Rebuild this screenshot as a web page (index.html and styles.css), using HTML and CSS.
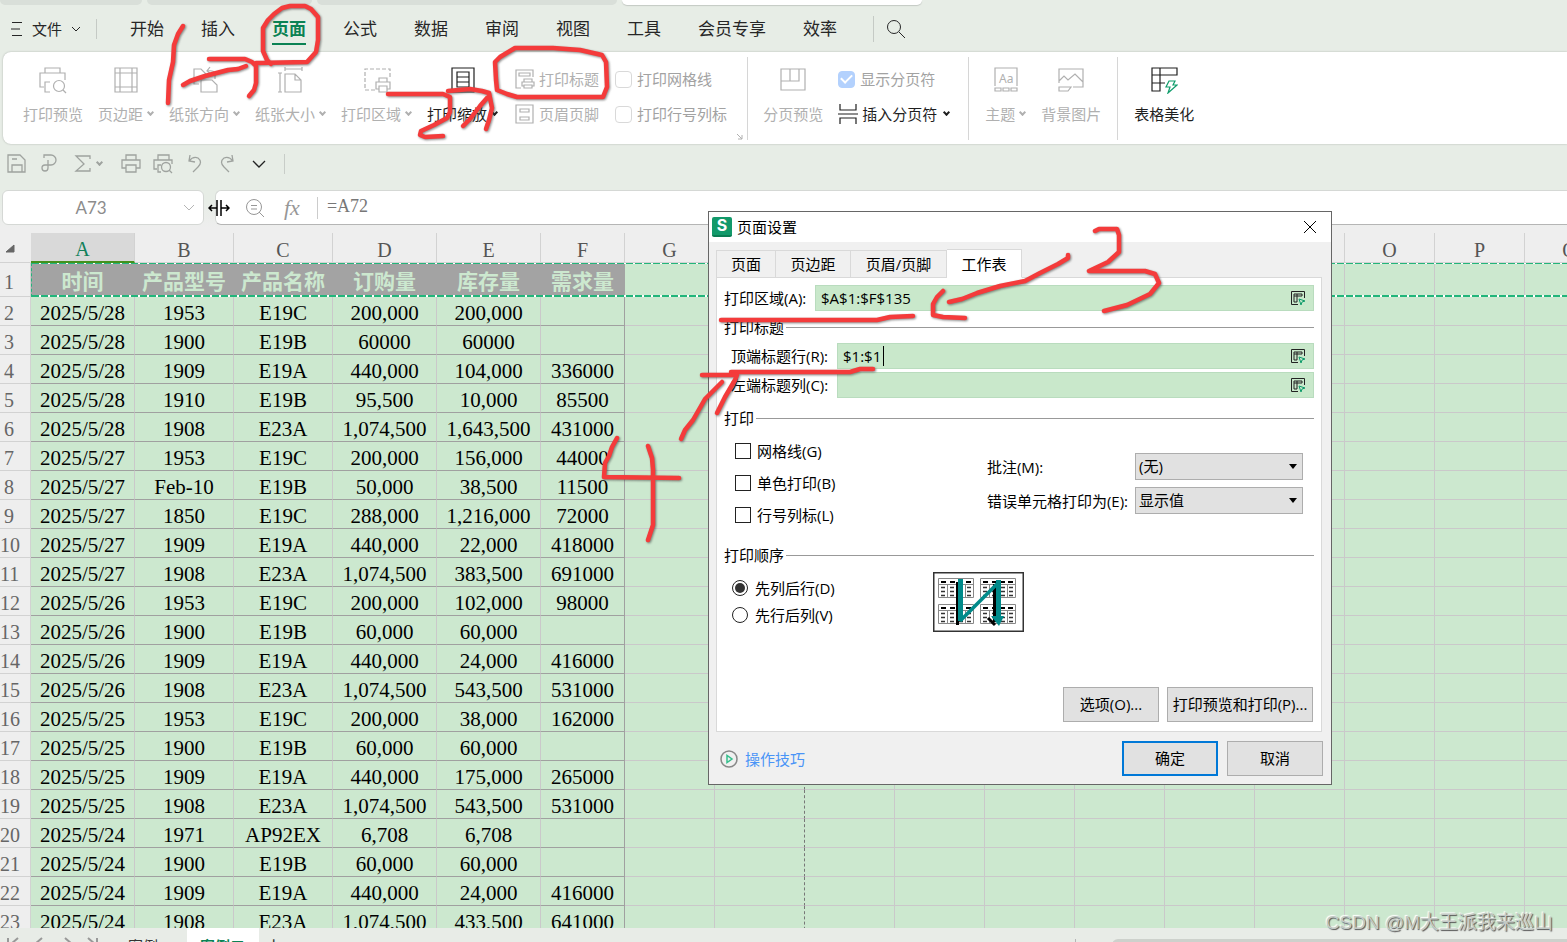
FILE: index.html
```
<!DOCTYPE html>
<html lang="zh-CN">
<head>
<meta charset="utf-8">
<title>页面设置</title>
<link rel="stylesheet" href="styles.css">
</head>
<body>
<div class="app">
  <div class="doc-tabs"><span class="doc-tab"></span><span class="doc-tab wide"></span><span class="doc-tab last"></span><span class="doc-tab active"></span></div>

  <nav class="menu">
    <button class="file-btn"><svg width="12" height="16" viewBox="0 0 12 16"><path d="M1 1.500h10M0 8h9M1 14.500h10" /></svg>文件<svg class="file-arrow" width="10" height="6" viewBox="0 0 10 6"><path d="M1 1l4 4 4-4"/></svg></button>
    <span class="menu-sep"></span>
    <div class="menu-items">
      <button>开始</button><button>插入</button><button class="active">页面</button><button>公式</button><button>数据</button><button>审阅</button><button>视图</button><button>工具</button><button>会员专享</button><button>效率</button>
    </div>
    <span class="menu-sep tall"></span>
    <button class="search" aria-label="搜索"><svg width="20" height="20" viewBox="0 0 20 20"><circle cx="8" cy="8" r="6.500"/><path d="M13 13l6 6"/></svg></button>
  </nav>

  <section class="ribbon">
    <div class="group">
      <button class="big"><svg width="28" height="28" viewBox="0 0 28 28"><path d="M6 7V2h15v5M5 21H1V7h25v7M11 16H6v10h5"/><circle cx="20" cy="20" r="5.500"/><path d="M24 24l3 3"/></svg><span>打印预览</span></button>
      <button class="big"><svg width="28" height="28" viewBox="0 0 28 28"><path d="M3 2h22v24H3zM8 2v24M20 2v24M3 7h22M3 21h22"/></svg><span>页边距<i class="chev"></i></span></button>
      <button class="big"><svg width="28" height="28" viewBox="0 0 28 28"><path d="M8 18H3V3h7l5 5v3M10 26V14h11l5 5v7zM24 13V7q-1-3-8-2M19 1l-3 4 4 3"/></svg><span>纸张方向<i class="chev"></i></span></button>
      <button class="big"><svg width="28" height="28" viewBox="0 0 28 28"><path d="M8 8h10l6 6v12H8zM18 8v6h6M8 3h17M8 1v4M25 1v4M3 7v19M1 7h4M1 26h4"/></svg><span>纸张大小<i class="chev"></i></span></button>
      <button class="big"><svg width="28" height="28" viewBox="0 0 28 28"><path stroke-dasharray="4 2" d="M12 24H2V3h25v9"/><path d="M16 16v-4h8v4M16 23h-3v-7h14v7h-3M16 20h8v6h-8z"/></svg><span>打印区域<i class="chev"></i></span></button>
      <button class="big on"><svg width="28" height="28" viewBox="0 0 28 28"><path d="M3 2h22v24H3zM8 6h12v15H8zM8 11h12M8 16h12"/></svg><span>打印缩放<i class="chev"></i></span></button>
      <div class="pairs">
        <button class="small"><svg width="20" height="20" viewBox="0 0 20 20"><path d="M6 19H1V1h17v7M4 4h11v3H4zM9 13v-3h8v3M9 17H7v-4h12v4h-2M9 16h8v3H9z"/></svg>打印标题</button>
        <label class="check"><input type="checkbox" disabled>打印网格线</label>
        <button class="small"><svg width="20" height="20" viewBox="0 0 20 20"><path d="M1 1h17v18H1zM5 5h9v3H5zM5 13h9v3H5z"/></svg>页眉页脚</button>
        <label class="check"><input type="checkbox" disabled>打印行号列标</label>
      </div>
      <svg class="launcher" width="7" height="7" viewBox="0 0 7 7"><path d="M1 1l5 5M6 2v4H2"/></svg>
    </div>
    <div class="group view">
      <button class="big"><svg width="28" height="28" viewBox="0 0 28 28"><path d="M2 3h24v21H2zM11 3v12M2 15h18V3"/></svg><span>分页预览</span></button>
      <div class="stack">
        <label class="check dim"><input type="checkbox" checked disabled>显示分页符</label>
        <button class="small on"><svg width="20" height="20" viewBox="0 0 20 20"><path d="M2 0v6h16V0M0 10h20M2 20v-6h16v6"/></svg>插入分页符<i class="chev"></i></button>
      </div>
    </div>
    <div class="group">
      <button class="big"><svg width="28" height="28" viewBox="0 0 28 28"><path d="M3 20V2h22v18M3 22h6v3H3zM11 22h6v3h-6zM19 22h6v3h-6z"/><text x="7" y="17" class="aa">Aa</text></svg><span>主题<i class="chev"></i></span></button>
      <button class="big"><svg width="28" height="28" viewBox="0 0 28 28"><path d="M2 17V3h24v18H16M2 15l5-5 4 4 7-6 8 8M2 21h12l-3 4H2z"/></svg><span>背景图片</span></button>
    </div>
    <div class="group">
      <button class="big on"><svg width="28" height="28" viewBox="0 0 28 28"><path d="M2 2h25v7H2zM2 9v16h8V2M2 17h13"/><path class="green" d="M19 15h6l-2 4h4l-9 8 2-6h-4z"/></svg><span>表格美化</span></button>
    </div>
  </section>

  <div class="quick">
    <button aria-label="保存"><svg width="20" height="20" viewBox="0 0 20 20"><path d="M1 1h12l5 5v12H1zM5 18v-7h10v7M5 5h5"/></svg></button>
    <button aria-label="导出"><svg width="20" height="20" viewBox="0 0 20 20"><path d="M5 4V1h7a5 5 0 0 1 0 10H6a3 3 0 1 0 3 3V6"/></svg></button>
    <button aria-label="求和" class="sum"><svg width="20" height="20" viewBox="0 0 20 20"><path d="M17 5V2H3l8 8-8 7h14v-3"/></svg><i class="chev"></i></button>
    <button aria-label="打印"><svg width="20" height="20" viewBox="0 0 20 20"><path d="M5 6V1h10v5M5 14H1V6h18v8h-4M5 11h10v7H5z"/></svg></button>
    <button aria-label="预览"><svg width="20" height="20" viewBox="0 0 20 20"><path d="M5 6V1h11v5M4 15H1V6h18v4M8 11H5v7h3"/><circle cx="13" cy="13" r="4.500"/><path d="M16 16l3 3"/></svg></button>
    <button aria-label="撤销"><svg width="20" height="20" viewBox="0 0 20 20"><path d="M5 1L4 7l6 1M4 7q4-5 9-3 5 4 0 9l-5 5"/></svg></button>
    <button aria-label="恢复"><svg width="20" height="20" viewBox="0 0 20 20"><path d="M15 1l1 6-6 1M16 7q-4-5-9-3-5 4 0 9l5 5"/></svg></button>
    <button aria-label="更多" class="more"><svg width="20" height="20" viewBox="0 0 20 20"><path d="M4 7l6 6 6-6"/></svg></button>
    <span class="quick-sep"></span>
  </div>

  <div class="formula-row">
    <div class="name-box"><input aria-label="名称框" value="A73"><svg width="12" height="8" viewBox="0 0 12 8"><path d="M1 1l5 5 5-5"/></svg></div>
    <div class="formula">
      <svg width="20" height="20" viewBox="0 0 20 20"><circle cx="9" cy="9" r="7.500"/><path d="M6 7.500h6M6 11h6M14 14l5 5"/></svg>
      <span class="fx">fx</span>
      <input aria-label="编辑栏" value="=A72">
    </div>
    <svg class="cursor" width="22" height="18" viewBox="0 0 22 18"><path d="M9 1v16M13 1v16M1 9h8M13 9h8M4 6L1 9l3 3M18 6l3 3-3 3"/></svg>
  </div>

  <main class="sheet">
    <table class="grid"><colgroup id="cols"></colgroup><thead id="head"></thead><tbody id="body"></tbody></table>
    <div class="ants"></div>
  </main>

  <footer class="sheet-bar">
    <svg class="sheet-nav" width="92" height="14" viewBox="0 0 92 14"><path d="M2 1v12M12 1L5 7l7 6M36 1l-7 6 7 6M59 1l7 6-7 6M82 1l7 6-7 6M91 1v12"/></svg>
    <button class="sheet-tab">案例一</button><button class="sheet-tab active">案例二</button><button class="add">+</button>
    <div class="hscroll"><i></i><b></b></div>
  </footer>
</div>

<section class="dialog" role="dialog" aria-label="页面设置">
  <header class="title"><span class="logo">S</span><span class="title-text">页面设置</span><button class="close" aria-label="关闭"><svg width="14" height="14" viewBox="0 0 14 14"><path d="M1 1l12 12M13 1L1 13"/></svg></button></header>
  <div class="tabs"><button class="t1">页面</button><button class="t2">页边距</button><button class="t3">页眉/页脚</button><button class="t4 active">工作表</button></div>
  <div class="panel">
    <div class="range"><label for="area">打印区域(A):</label><div class="range-box"><input id="area" value="$A$1:$F$135"><button aria-label="选择区域"><svg width="16" height="16" viewBox="0 0 16 16"><path d="M8 14.500H1.500v-13h13V8M4 12V4h8v2H4M7 4v8H4"/><path class="green" d="M9 9l6 2-3 1-1 3z"/></svg></button></div></div>
    <h3>打印标题</h3>
    <div class="range indent"><label for="rows">顶端标题行(R):</label><div class="range-box"><input id="rows" class="fit" value="$1:$1"><i class="caret"></i><button aria-label="选择行"><svg width="16" height="16" viewBox="0 0 16 16"><path d="M8 14.500H1.500v-13h13V8M4 12V4h8v2H4M7 4v8H4"/><path class="green" d="M9 9l6 2-3 1-1 3z"/></svg></button></div></div>
    <div class="range indent"><label for="lcols">左端标题列(C):</label><div class="range-box"><input id="lcols" value=""><button aria-label="选择列"><svg width="16" height="16" viewBox="0 0 16 16"><path d="M8 14.500H1.500v-13h13V8M4 12V4h8v2H4M7 4v8H4"/><path class="green" d="M9 9l6 2-3 1-1 3z"/></svg></button></div></div>
    <h3 class="h-print">打印</h3>
    <div class="print-opts">
      <div class="ticks">
        <label><input type="checkbox">网格线(G)</label>
        <label><input type="checkbox">单色打印(B)</label>
        <label><input type="checkbox">行号列标(L)</label>
      </div>
      <div class="selects">
        <label for="note">批注(M):</label><div class="pick"><select id="note"><option>(无)</option></select><i></i></div>
        <label for="err">错误单元格打印为(E):</label><div class="pick"><select id="err"><option>显示值</option></select><i></i></div>
      </div>
    </div>
    <h3 class="h-order">打印顺序</h3>
    <div class="order">
      <div class="radios">
        <label><input type="radio" name="order" checked>先列后行(D)</label>
        <label><input type="radio" name="order">先行后列(V)</label>
      </div>
      <svg class="order-pic" width="91" height="60" viewBox="0 0 91 60">
        <defs><g id="mini"><path fill="#fff" stroke="#888" d="M.5.5h35v19H.5zM0 6.500h36M9.500 6v14M18.500 6v14M27.500 6v14"/><path stroke="#000" stroke-width="2" d="M3 4h5M12 4h5M20 4h5M28 4h5"/><path stroke="#333" stroke-width="1.500" d="M3 9.500h4M3 13.500h4M3 17.500h4M12 9.500h4M12 13.500h4M12 17.500h4M21 9.500h4M21 13.500h4M21 17.500h4M29 9.500h4M29 13.500h4M29 17.500h4"/></g></defs>
        <rect x=".75" y=".75" width="89.500" height="58.500" fill="#fff" stroke="#333" stroke-width="1.500"/>
        <use href="#mini" x="5" y="6"/><use href="#mini" x="47" y="6"/><use href="#mini" x="5" y="32"/><use href="#mini" x="47" y="32"/>
        <path stroke="#000" stroke-width="3" d="M24.500 10v43M61.500 12v38M55 46l7 7"/>
        <path stroke="#008a8a" stroke-width="5" d="M27.500 7v42M65.500 8v40"/><path stroke="#008a8a" stroke-width="3.500" d="M27 49L66 10"/><path fill="#008a8a" stroke="none" d="M58 44h13l-5 10z"/>
      </svg>
    </div>
    <div class="panel-actions"><button class="btn">选项(O)...</button><button class="btn wide">打印预览和打印(P)...</button></div>
  </div>
  <footer class="dialog-foot">
    <a href="#" class="tips"><svg width="18" height="18" viewBox="0 0 18 18"><circle cx="9" cy="9" r="8"/><path d="M7 5.500v7l5-3.500z"/></svg>操作技巧</a>
    <button class="btn primary">确定</button><button class="btn">取消</button>
  </footer>
</section>

<svg class="ink" width="1567" height="942" viewBox="0 0 1567 942" aria-hidden="true">
  <path d="M271 64L267 60 263 51V28L268 20 274 14 282 8 290 6H305L311 9 318 17V40L316 52 307 62 256 63"/>
  <path d="M183 26L178 34 174 45 173 62 169 80 168 103"/>
  <path d="M209 59H245L252 62 256 66V83L254 90 249 96M183 85L190 81 205 76 228 70 238 69 246 66"/>
  <path d="M388 94H443L450 97V112L447 118 434 125 421 131 420 135 425 137 443 136"/>
  <path d="M448 91L470 89 482 91 489 93 492 108 489 120 486 129M487 98L480 106 470 119 463 126"/>
  <path d="M495 62L500 57 515 48H553L580 50 602 55 606 62 607 87 603 97H517L507 94 497 90 496 80z"/>
  <path d="M1095 231L1099 229H1117L1119 235V252L1108 262 1089 271H1145L1155 274 1159 283 1150 294 1127 305 1104 311"/>
  <path d="M1068 255V258L1058 264 1040 273 1025 281 1000 286 977 293 962 299 949 302M943 291L937 297 933 304V315L943 317 965 318"/>
  <path d="M721 320H877L890 317 913 316M731 372H850L860 369 873 369"/>
  <path d="M702 375H737L735 380 725 397 717 413M722 382L705 399 693 420 685 430 681 439"/>
  <path d="M617 438L612 447 609 456 605 463 604 477 679 478M648 446L652 458 653 470V525L648 540"/>
</svg>
<div class="watermark">CSDN @M大王派我来巡山</div>
<script src="app.js"></script>
</body>
</html>
```
FILE: styles.css
```
* { box-sizing: border-box; }
body { margin: 0; overflow: hidden; font: 15px/20px "Open Sans", "Noto Sans CJK SC", sans-serif; color: #000; }
button { font: inherit; color: inherit; background: none; border: 0; padding: 0; white-space: nowrap; }
input, select { font: inherit; color: inherit; margin: 0; }
svg { display: block; flex: none; fill: none; stroke: currentColor; }
.app { height: 100vh; display: flex; flex-direction: column; background: #e7ede6; overflow: hidden; position: relative; }

.doc-tabs { display: flex; gap: 5px; height: 5px; flex: none; }
.doc-tab { width: 142px; background: #d9dfd9; border-radius: 0 0 8px 8px; }
.doc-tab.wide { width: 165px; }
.doc-tab.last { width: 300px; }
.doc-tab.active { width: 300px; background: #fff; box-shadow: 0 1px 1px #c4c9c4; }

.menu { display: flex; align-items: center; height: 47px; flex: none; padding-left: 11px; color: #262626; }
.file-btn { display: flex; align-items: center; gap: 9px; width: 85px; }
.menu-sep { width: 1px; height: 20px; background: #c5cac5; }
.menu-sep.tall { height: 26px; margin-left: 36px; }
.menu-items { display: flex; gap: 37px; margin-left: 33px; font-size: 17px; line-height: 28px; }
.menu-items .active { color: #0b8254; font-weight: 700; border-bottom: 2px solid #0b8254; margin-top: 2px; }
.search { margin-left: 12px; }

.ribbon { display: flex; height: 92px; flex: none; margin-left: 3px; padding: 5px 0 4px; background: #fff; border-radius: 8px 0 0 8px; box-shadow: 0 0 2px #a8aea8; color: #b0b0b0; }
.group { display: flex; gap: 15px; padding: 9px 16px 0; border-right: 1px solid #d6d6d6; position: relative; }
.group:first-child { padding-left: 20px; padding-right: 20px; }
.group.view { padding-left: 15px; padding-right: 18px; }
.group:last-child { border: 0; }
.big { display: flex; flex-direction: column; align-items: center; gap: 10px; align-self: flex-start; }
.big svg, .small svg { stroke-width: 1.200; }
.big span, .small, .check { display: flex; align-items: center; line-height: 20px; white-space: nowrap; }
.on { color: #1f1f1f; }
.chev { width: 5px; height: 5px; margin: 0 1px 3px 5px; border: solid currentColor; border-width: 0 2px 2px 0; transform: rotate(45deg); }
.pairs { display: grid; grid-template-columns: auto auto; gap: 15px 16px; align-content: start; padding: 3px 0 0 2px; }
.stack { display: grid; gap: 15px; align-content: start; padding-top: 3px; }
.small { gap: 4px; }
.small .chev { margin-left: 3px; }
.check { gap: 5px; color: #a2a2a2; }
.check input { appearance: none; width: 17px; height: 17px; border: 1px solid #d9d9d9; border-radius: 4px; background: #fff; }
.check input:checked { border-color: #b3d1fd; background: #b3d1fd; display: grid; place-items: center; }
.check input:checked::after { content: ""; width: 9px; height: 5px; border: solid #fff; border-width: 0 0 2px 2px; transform: rotate(-45deg); margin-bottom: 3px; }
.launcher { position: absolute; right: 4px; bottom: 0; }
.green { stroke: #0f9c6b; }
.aa { font: 12px "Noto Sans", sans-serif; fill: currentColor; stroke: none; }

.quick { display: flex; align-items: center; gap: 12px; height: 40px; flex: none; padding-left: 7px; color: #9fa39f; }
.quick svg { stroke-width: 1.300; }
.quick button { display: flex; align-items: center; }
.quick .sum { width: 37px; margin-left: 2px; margin-right: -1px; }
.quick .sum .chev { margin-left: 4px; }
.quick .more { color: #222; }
.quick-sep { width: 1px; height: 20px; background: #c8cdc8; margin-left: 3px; }

.formula-row { display: flex; gap: 11px; padding: 6px 0 8px 2px; position: relative; flex: none; background: linear-gradient(#e7ede6 30%, #eee 90%); color: #979797; }
.name-box, .formula { display: flex; align-items: center; height: 35px; background: #fff; border: 1px solid #d5d8d5; border-radius: 6px; }
.name-box { width: 202px; padding-right: 8px; color: #b5b5b5; }
.name-box input { flex: 1; min-width: 0; padding: 0 4px 0 0; border: 0; background: none; font: 17px Lato, sans-serif; color: #8c8c8c; text-align: center; }
.formula { flex: 1; padding-left: 29px; border-right: 0; border-bottom-color: #b5b5b5; border-radius: 6px 0 0 6px; }
.fx { font: italic 22px/30px "Liberation Serif", serif; margin-left: 19px; padding-right: 17px; }
.formula input { flex: 1; height: 22px; border: 0; border-left: 1px solid #ccc; padding: 0 0 2px 9px; font: 18px/20px "Liberation Serif", serif; color: #777; background: none; }
.cursor { position: absolute; left: 208px; top: 15px; color: #000; stroke-width: 1.500; }

.sheet { flex: 1; min-height: 0; overflow: hidden; position: relative; background: linear-gradient(#eee 30px, #cce8cf 30px); }
.grid { table-layout: fixed; width: 0; border-collapse: separate; border-spacing: 0; font: 21px/24px "Liberation Serif", "Noto Sans CJK SC", serif; text-align: center; }
.c-head { width: 31px; } .c-a { width: 104px; } .c-b { width: 99px; } .c-f { width: 84px; } .c-g { width: 90px; }
.grid th, .grid td { padding: 4px 0 0; height: 29px; white-space: nowrap; border-right: 1px solid #cac8ca; border-bottom: 1px solid #cac8ca; }
.grid thead th { height: 30px; font-weight: 400; font-size: 20px; color: #555; background: #eee; border-color: #d2d2d2; }
.grid thead .corner { border-right-color: #eee; padding-top: 0; }
.corner svg { margin: 2px 0 0 5px; color: #666; fill: #666; }
.grid thead .picked { background: #d9d9d9; color: #11805a; border-bottom: 2px solid #45901c; }
.grid tbody th { font-weight: 400; font-size: 20px; color: #666; background: #eee; border-color: #d2d2d2; padding-right: 12px; }
.grid tbody tr:first-child > * { height: 34px; }
.grid td.data { border-bottom-color: #a0a0a0; }
.grid td.edge { border-right-color: #a0a0a0; }
.grid td.label { background: #a3a3a3; border-color: #a3a3a3; color: #cce8cf; font-weight: 700; }
.grid td.break { border-right: 1px dashed #777; }
.ants { position: absolute; left: 31px; right: 0; top: 30px; height: 34px; border-left: 1px dashed #22b57b; background: repeating-linear-gradient(90deg, #22b57b 0 7px, #fff 7px 9px) top / 100% 1px no-repeat, repeating-linear-gradient(90deg, #22b57b 0 7px, #fff 7px 9px) bottom / 100% 2px no-repeat; }

.sheet-bar { display: flex; height: 14px; flex: none; overflow: hidden; padding-left: 6px; background: #e8ece7; color: #333; }
.sheet-nav { margin-top: 9px; color: #999; stroke-width: 2; }
.sheet-tab { height: 32px; padding: 3px 13px 0 30px; width: 89px; text-align: left; overflow: hidden; }
.sheet-tab.active { width: 72px; padding-left: 13px; background: #fff; color: #0b8254; font-weight: 700; }
.add { height: 32px; margin-left: 9px; font-size: 20px; }
.hscroll { display: flex; flex: 1; padding: 11px 0 0 796px; color: #999; }
.hscroll i { width: 1px; height: 12px; background: #b5b5b5; margin-right: 36px; }
.hscroll b { flex: 1; height: 12px; border-radius: 6px 0 0 6px; background: #cdd1cc; }

.dialog { position: absolute; left: 708px; top: 211px; width: 624px; border: 1px solid #666; background: #f0f0f0; }
.title { display: flex; align-items: center; height: 30px; padding: 0 14px 0 3px; background: #fff; }
.logo { width: 20px; height: 20px; border-radius: 2px; background: #12996a; color: #fff; text-align: center; font: 700 16px/17px Inter, sans-serif; border-bottom: 2px solid #0a7d53; }
.title-text { flex: 1; margin-left: 5px; }
.tabs { display: flex; align-items: flex-end; height: 36px; padding: 7px 0 0 7px; margin-bottom: -1px; position: relative; }
.tabs button { height: 28px; border: 1px solid #d9d9d9; border-left-width: 0; }
.tabs .t1 { width: 60px; border-left-width: 1px; } .tabs .t2 { width: 75px; } .tabs .t3 { width: 96px; }
.tabs .t4 { width: 75px; height: 29px; background: #fff; border-bottom-color: #fff; }
.panel { margin: 0 9px 0 7px; padding: 7px 7px 9px; border: 1px solid #d9d9d9; background: #fff; display: flex; flex-direction: column; }
.range { display: flex; align-items: center; gap: 6px; margin-bottom: 3px; white-space: nowrap; }
.range label { width: 85px; }
.range.indent { padding-left: 7px; }
.range.indent label { width: 100px; }
.range-box { flex: 1; display: flex; align-items: center; height: 26px; padding: 0 7px 0 5px; background: #c9e8cb; border: 1px solid #b9dcbe; }
.range-box input { flex: 1; min-width: 0; padding: 0; border: 0; background: none; outline: 0; height: 22px; }
.range-box .fit { flex: none; width: 40px; }
.caret { width: 1px; height: 20px; background: #000; }
.range-box button { margin-left: auto; color: #222; }
h3 { display: flex; align-items: center; gap: 2px; margin: 3px 0 6px; font: inherit; }
h3::after { content: ""; flex: 1; height: 1px; background: #999; }
.h-print { margin: 7px 0 13px; }
.print-opts { display: flex; justify-content: space-between; padding: 0 11px; }
.ticks { display: grid; gap: 12px; }
.ticks label, .radios label { display: flex; align-items: center; gap: 6px; }
.ticks input { appearance: none; width: 16px; height: 16px; border: 1px solid #222; background: #fff; }
.selects { display: grid; grid-template-columns: auto 168px; gap: 7px; align-items: center; align-content: start; padding-top: 12px; white-space: nowrap; }
.pick { position: relative; }
.pick select { appearance: none; display: block; width: 100%; height: 27px; padding: 0 4px 2px 3px; border: 1px solid #adadad; border-radius: 0; background: #e1e1e1; }
.pick i { position: absolute; right: 6px; top: 11px; border: 4px solid transparent; border-top: 5px solid #000; border-bottom: 0; }
.h-order { margin: 20px 0 7px; }
.order { display: flex; }
.radios { display: grid; gap: 7px; align-content: start; width: 209px; padding: 6px 0 0 8px; }
.radios input { appearance: none; width: 16px; height: 16px; border: 1px solid #222; border-radius: 50%; background: #fff; display: grid; place-items: center; }
.radios input:checked::after { content: ""; width: 10px; height: 10px; border-radius: 50%; background: #333; }
.radios label { gap: 7px; }
.panel-actions { display: flex; justify-content: flex-end; gap: 8px; padding: 55px 1px 0 0; }
.btn { width: 96px; height: 35px; border: 1px solid #adadad; background: #e1e1e1; padding-bottom: 2px; }
.btn.wide { width: 146px; }
.btn.primary { border: 2px solid #0078d7; }
.dialog-foot { display: flex; align-items: center; gap: 9px; padding: 9px 8px 8px 11px; }
.tips { display: flex; align-items: center; gap: 7px; flex: 1; color: #4a94f7; text-decoration: none; }
.tips circle { stroke: #888; stroke-width: 1.500; }
.tips path { stroke: #35bf8c; stroke-width: 1.500; }

.ink { position: absolute; left: 0; top: 0; pointer-events: none; stroke: #f43b3b; stroke-width: 4.500; stroke-linecap: round; stroke-linejoin: round; filter: drop-shadow(1px 1px 1px rgba(60, 60, 60, .6)); }
.watermark { position: absolute; right: 14px; bottom: 6px; font: 19px/26px "Liberation Sans", "Noto Sans CJK SC", sans-serif; color: #c3cac5; text-shadow: 1px 1px 1px #555, -1px -1px 1px #fff; }
```
FILE: app.js
```
const columns = 'ABCDEFGHIJKLMNOPQ'.split('');
const classes = ['c-a', 'c-b', 'c-b', 'c-a', 'c-a', 'c-f'];
const rows = [
  ['时间', '产品型号', '产品名称', '订购量', '库存量', '需求量'],
  ['2025/5/28', '1953', 'E19C', '200,000', '200,000', ''],
  ['2025/5/28', '1900', 'E19B', '60000', '60000', ''],
  ['2025/5/28', '1909', 'E19A', '440,000', '104,000', '336000'],
  ['2025/5/28', '1910', 'E19B', '95,500', '10,000', '85500'],
  ['2025/5/28', '1908', 'E23A', '1,074,500', '1,643,500', '431000'],
  ['2025/5/27', '1953', 'E19C', '200,000', '156,000', '44000'],
  ['2025/5/27', 'Feb-10', 'E19B', '50,000', '38,500', '11500'],
  ['2025/5/27', '1850', 'E19C', '288,000', '1,216,000', '72000'],
  ['2025/5/27', '1909', 'E19A', '440,000', '22,000', '418000'],
  ['2025/5/27', '1908', 'E23A', '1,074,500', '383,500', '691000'],
  ['2025/5/26', '1953', 'E19C', '200,000', '102,000', '98000'],
  ['2025/5/26', '1900', 'E19B', '60,000', '60,000', ''],
  ['2025/5/26', '1909', 'E19A', '440,000', '24,000', '416000'],
  ['2025/5/26', '1908', 'E23A', '1,074,500', '543,500', '531000'],
  ['2025/5/25', '1953', 'E19C', '200,000', '38,000', '162000'],
  ['2025/5/25', '1900', 'E19B', '60,000', '60,000', ''],
  ['2025/5/25', '1909', 'E19A', '440,000', '175,000', '265000'],
  ['2025/5/25', '1908', 'E23A', '1,074,500', '543,500', '531000'],
  ['2025/5/24', '1971', 'AP92EX', '6,708', '6,708', ''],
  ['2025/5/24', '1900', 'E19B', '60,000', '60,000', ''],
  ['2025/5/24', '1909', 'E19A', '440,000', '24,000', '416000'],
  ['2025/5/24', '1908', 'E23A', '1,074,500', '433,500', '641000']
];

document.getElementById('cols').innerHTML =
  '<col class="c-head">' + columns.map((c, i) => `<col class="${classes[i] || 'c-g'}">`).join('');

document.getElementById('head').innerHTML =
  '<tr><th class="corner"><svg width="10" height="9" viewBox="0 0 10 9"><path d="M9 1v7H1z"/></svg></th>' +
  columns.map((c, i) => `<th${i === 0 ? ' class="picked"' : ''}>${c}</th>`).join('') + '</tr>';

document.getElementById('body').innerHTML = rows.map((row, r) =>
  `<tr><th>${r + 1}</th>` + columns.map((c, i) => {
    const names = [];
    if (i < 6) names.push(r === 0 ? 'label' : 'data');
    if (i === 5) names.push('edge');
    if (c === 'H') names.push('break');
    return `<td class="${names.join(' ')}">${row[i] || ''}</td>`;
  }).join('') + '</tr>').join('');
```
